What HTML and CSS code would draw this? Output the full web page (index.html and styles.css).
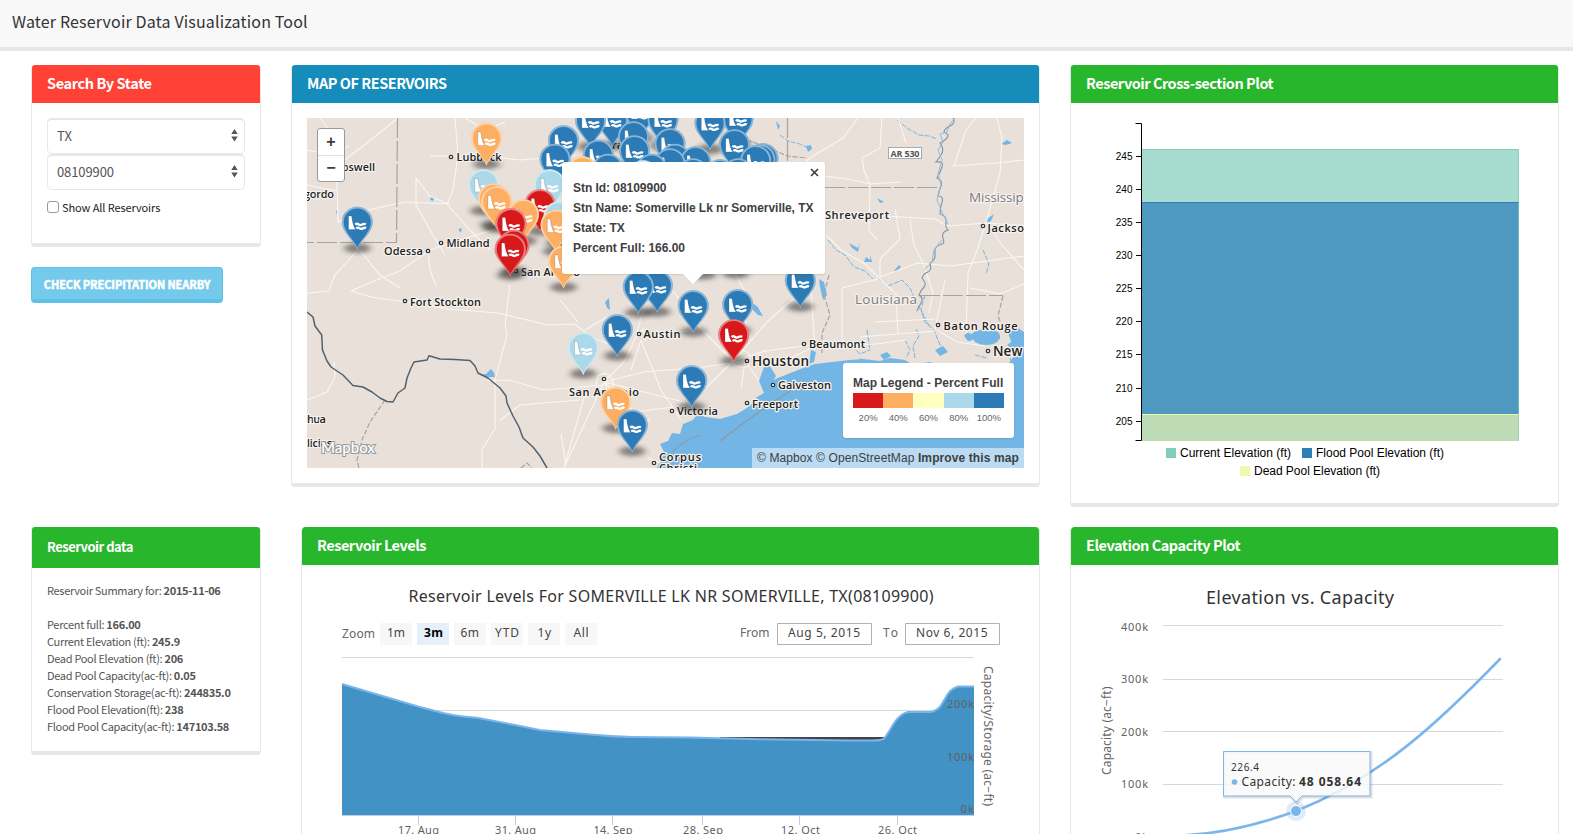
FILE: index.html
```html
<!DOCTYPE html>
<html lang="en">
<head>
<meta charset="utf-8">
<title>Water Reservoir Data Visualization Tool</title>
<link rel="stylesheet" href="styles.css">
</head>
<body>
<header class="navbar"><span class="brand">Water Reservoir Data Visualization Tool</span></header>
<main class="dashboard">
  <section class="side">
    <div class="panel search">
      <h3 class="head red">Search By State</h3>
      <div class="body">
        <div class="select"><span>TX</span><svg width="7" height="13" viewBox="0 0 7 13"><path d="M3.5 0L6.7 5H.3ZM.3 7.5H6.7L3.5 12.5Z"/></svg></div>
        <div class="select"><span>08109900</span><svg width="7" height="13" viewBox="0 0 7 13"><path d="M3.5 0L6.7 5H.3ZM.3 7.5H6.7L3.5 12.5Z"/></svg></div>
        <label class="check"><i></i><span>Show All Reservoirs</span></label>
      </div>
    </div>
    <button class="precip">CHECK PRECIPITATION NEARBY</button>
  </section>

  <section class="panel mappanel">
    <h3 class="head blue">MAP OF RESERVOIRS</h3>
    <div class="map">
      <svg class="canvas" width="717" height="350" viewBox="307 118 717 350">
        <defs>
          <filter id="soft" x="-50%" y="-100%" width="200%" height="300%"><feGaussianBlur stdDeviation="3.2 2"/></filter>
          <g id="pin">
            <ellipse cx="0" cy="-1" rx="13" ry="5" fill="#222" opacity=".5" filter="url(#soft)"/>
            <path d="M0 .5C-3 -9 -15.500 -16.500 -15.500 -27A15.500 15.500 0 1 1 15.500 -27C15.500 -16.500 3 -9 0 .5Z" fill="currentColor"/>
            <path d="M0 .5C-3 -9 -15.500 -16.500 -15.500 -27A15.500 15.500 0 1 1 15.500 -27C15.500 -16.500 3 -9 0 .5Z" fill="#fff" opacity=".45"/>
            <path d="M0 -1.500C-3 -9.500 -13.600 -17 -13.600 -27A13.600 13.600 0 1 1 13.600 -27C13.600 -17 3 -9.500 0 -1.500Z" fill="currentColor"/>
            <path d="M-8.700 -19.800V-33.300H-5.700C-4.900 -27 -4 -23 -1.700 -19.800Z" fill="#fff" stroke="#345" stroke-opacity=".35" stroke-width=".6"/>
            <path d="M-2 -24.600q1.600 -1.700 3.200 -.3t3.600 .2t3.800 -.3M-1 -20.700q1.500 -1.600 3 -.3t3.400 .2t3.400 -.3" fill="none" stroke="#fff" stroke-width="2.300"/>
          </g>
        </defs>
        <rect x="307" y="118" width="717" height="350" fill="#e8e0d9"/>
        <!-- gulf and bays -->
        <g fill="#73b6e6">
          <path d="M657 468L664 452 660 444 668 441 672 433 680 434 683 424 693 420 698 413 705 417 720 419 737 414 750 406 757 397 764 393 759 381 764 367 771 370 773 380 783 376 803 368 815 364 832 362 850 360 863 359 880 361 890 358 905 360 913 365 930 362 950 372 980 366 1000 369 1010 362 1016 352 1007 345 1017 338 1024 335V468Z"/>
          <path d="M971 335q5 -7 18 -4q12 -2 11 7q-3 7 -13 7q-14 0 -16 -10M964 336q4 -6 8 -1t-4 6ZM1008 333l10 -5 6 4v10l-12 2ZM764 366l4 -3 8 13 -4 6ZM750 302l7 4 6 10 -5 -1 -8 -8ZM811 350l5 2 -2 10 -5 2Z"/>
          <path d="M605 302l4 -4 1 12 -3 -2ZM819 279l5 3 3 13 -4 5 -3 -13ZM806 146l5 -1 1 4 -4 3ZM987 219l7 -5 -3 7 -6 3Z"/>
          <path d="M486 374l5 -5 3 4 1 4h-7l-8 -2ZM893 272l6 -7 2 2 -4 4ZM1001 144l6 -4 5 3 -6 2ZM849 243l9 5 2 -5 -2 9 -6 -4ZM856 364l5 -6 4 5ZM880 355l7 -3 4 4 -7 4ZM935 350l8 -4 5 6 -8 4Z"/>
          <path d="M431 197l3 1 -1 3 -3 -1ZM459 228l3 1 -1 3 -2 -1ZM336 210l2 2 -1 4ZM776 121l4 5 -2 4ZM866 257l4 3v-5l2 7h-8ZM877 198l7 4 -4 1Z"/>
        </g>
        <path d="M672 452Q684 440 700 435M795 388Q760 410 720 441" fill="none" stroke="#8d9aa3" stroke-width="1.200"/>
        <g fill="none" stroke="#73b6e6" stroke-width="1" stroke-dasharray="5 1.500">
          <path d="M828 240l8 10 9 5 9 12 11 4 8 8M878 278l10 8 14 -6 8 8 6 14 7 12 6 12M897 120l10 8 12 7 10 1 8 3M780 135l8 6 12 3 8 4"/>
          <path d="M915 358l-2 -12 6 -10 -3 -8M925 295l-4 14 4 13 9 8 8 20M983 250l6 14 -3 10M852 346l8 8 10 -4M867 330l3 20M905 340l5 10 -4 8M975 355l12 3M1010 358l6 20 4 12"/>
        </g>
        <!-- roads -->
        <g fill="none" stroke="#faf7f3" stroke-width="1.100">
          <path d="M398 118L368 142 346 159 330 170M337 180L338 222 352 216 368 210 405 202 450 204M358 250L335 275 329 291 307 293M358 248L380 275 400 288M351 291L374 281 400 271 430 250 460 240 500 228 523 218M307 150l20 4 22 -8M455 118L458 155 453 190 447 204 470 230 490 250M430 156H485L520 160 548 158 575 155M416 178L430 196 448 204M416 178V205L433 235 445 255"/>
          <path d="M428 250l2 20 6 16M351 291l20 6 35 5 42 7 50 4 50 12 26 -1 20 14 20 8M510 285l-5 40 2 10 -12 45v50M488 381l20 -1 36 10 60 -5M494 430L482 450V468M500 420l20 -15 60 -5M561 434l5 32M585 394l-21 74M604 382l-40 86M604 382l20 -20 12 -25 5 -20M604 382l40 -10 60 -5 40 -6M604 382l12 30 14 40M641 340l-10 30M641 340l20 50 20 30M604 382l80 20M604 382l30 30 40 -5M733 361l-45 45M733 361l35 -40 25 -22M733 361l-30 -30 -30 -40M733 361l32 -10 60 -8M745 345l2 -50 -14 -25M745 361l14 20M745 361l-4 28M673 468l-25 -10M693 330l-50 8"/>
          <path d="M858 118l-15 20 -25 15 -12 8M882 118l-2 30 -18 10 2 12 6 15 -1 45 8 10M817 175l30 4 24 5 30 -2M898 118l8 25M825 214h30l30 2 50 3 12 7 40 -3 42 3M826 235l15 15 24 14 15 15 16 15 2 40M880 277v-18l20 -20 -5 -30M880 277l38 -14 32 3 30 -4 44 -6M842 288l36 -9M842 288v58M875 322l60 -3M860 337l75 -6M910 220l4 25 9 18 10 30 -4 20M986 223l-10 30 -8 20 -2 60M986 223l17 23 21 24M986 223l14 -50 2 -35 -5 -20M952 166l45 -3 27 -3M954 166l12 -36 10 -12M970 288l30 6 24 -10M937 330l20 12 28 4M935 330l10 -50M815 350l-4 -60M786 360l30 -14 60 -2 30 -4"/>
          <path d="M307 400l20 -8 8 -15 -1 -15M307 185l30 6M320 118l8 10M465 118l20 12 20 -8M560 300l18 22M585 330l20 -12 30 -2M650 418l-20 30"/>
          <path d="M598 376q10 -6 14 3t-4 12q-12 2 -12 -7ZM735 353q14 -6 15 5t-9 9q-13 -2 -8 -13ZM637 335l6 -6 3 12"/>
        </g>
        <!-- borders -->
        <g fill="none" stroke="#a5a3a3" stroke-width="1.200" stroke-dasharray="20 3">
          <path d="M397.500 118L396.500 242.500H307M787.500 118V165M825 187.500H937M920 295.500H1003"/>
          <path d="M385 400L370 422 362 440 357 460 359 468M740 138l25 8 22 10 20 2M1003 296l-5 20 8 20M829 275l-5 20 6 20 -8 18v20M521 468l6 -5 5 5" stroke-dasharray="5 2"/>
        </g>
        <path d="M307 312L313 317 315 326 321.700 335 322.500 350 327 361 331 367 343 375 353 385.500 363 387 372 392 380 398 387 401.500 393 402 398 393 405 388 407 378 411 368 414 362 427 360 429 355.700 440 359 455 359.500 470 360.500 475 366 478 373 488 378 500 388 506 396 507 403 513 416 519 427 523 438 533 447 540 456 547 468" fill="none" stroke="#52616e" stroke-width="1.500" stroke-linejoin="round"/>
        <path d="M953 118q3 5 -3 8t-6 6q7 3 2 7t-6 4q5 6 1 12t-5 7q8 -1 6 5t-5 11q6 3 4 8t-3 10q6 0 4 6t-2 12q7 2 6 8t2 8q-7 2 -5 8t-1 6q-8 2 -7 9t-5 10q2 8 -2 9t-6 6q5 6 2 9t-5 8q5 3 2 8t-4 8" fill="none" stroke="#8094a5" stroke-width="1.100"/>
        <path d="M955 118l-5 6 -3 8 -7 2 3 8 -5 8 4 10 -4 14 3 10 -4 16 5 12 6 12M942 240l-8 10 -2 12 -8 8" fill="none" stroke="#8fbbe0" stroke-width="1"/>
        <!-- place names -->
        <g class="places">
          <g fill="#fff" stroke="#333" stroke-width="1.300"><circle cx="451" cy="157" r="1.700"/><circle cx="441" cy="243" r="1.700"/><circle cx="428" cy="251" r="1.700"/><circle cx="516" cy="271" r="1.700"/><circle cx="405" cy="301" r="1.700"/><circle cx="639" cy="334" r="1.700"/><circle cx="747" cy="361" r="1.700"/><circle cx="604" cy="379" r="1.700"/><circle cx="672" cy="411" r="1.700"/><circle cx="654" cy="463" r="1.700"/><circle cx="747" cy="403" r="1.700"/><circle cx="773" cy="385" r="1.700"/><circle cx="804" cy="344" r="1.700"/><circle cx="938" cy="325" r="1.700"/><circle cx="983" cy="226" r="1.700"/><circle cx="988" cy="351" r="1.700"/></g>
          <text x="335" y="171" textLength="40">Roswell</text>
          <text x="304" y="198" textLength="30">gordo</text>
          <text x="456.500" y="161" textLength="45">Lubbock</text>
          <text x="446.500" y="247" textLength="43">Midland</text>
          <text x="384" y="255" textLength="39">Odessa</text>
          <text x="521" y="275.500" textLength="59">San Angelo</text>
          <text x="410" y="305.500" textLength="71">Fort Stockton</text>
          <text x="307" y="423" textLength="19">hua</text>
          <text x="307" y="447" textLength="25">licias</text>
          <text x="643.500" y="338" textLength="37">Austin</text>
          <text x="569" y="395.500" textLength="70">San Antonio</text>
          <text x="677" y="415" textLength="41">Victoria</text>
          <text x="659" y="461" textLength="42">Corpus</text>
          <text x="659" y="472" textLength="38">Christi</text>
          <text x="752" y="365.500" textLength="57" style="font-size:13.500px">Houston</text>
          <text x="778" y="389" textLength="53">Galveston</text>
          <text x="752" y="408" textLength="46">Freeport</text>
          <text x="809" y="348" textLength="56">Beaumont</text>
          <text x="825" y="218.500" textLength="64">Shreveport</text>
          <text x="943.500" y="329.500" textLength="74">Baton Rouge</text>
          <text x="987.500" y="231.500" textLength="44">Jackson</text>
          <text x="993" y="356" textLength="84" style="font-size:13.500px">New Orleans</text>
          <text x="612" y="149">ra</text>
          <text class="state" x="855" y="304" textLength="62">Louisiana</text>
          <text class="state" x="969" y="201.500" textLength="66">Mississippi</text>
        </g>
        <rect x="888.500" y="147.500" width="33" height="11" fill="#fff" stroke="#aaa"/>
        <text class="shield" x="905" y="156.500" text-anchor="middle" textLength="29">AR 530</text>
        <!-- reservoir pins -->
        <g transform="translate(0 .7)">
        <g color="#2c7bb6">
          <use href="#pin" x="640" y="138"/><use href="#pin" x="612.500" y="146"/><use href="#pin" x="590.600" y="147"/><use href="#pin" x="663" y="146"/><use href="#pin" x="738" y="145"/><use href="#pin" x="710" y="149.500"/>
          <use href="#pin" x="633.500" y="163"/><use href="#pin" x="563.500" y="167"/><use href="#pin" x="670" y="170"/><use href="#pin" x="734.500" y="171"/><use href="#pin" x="634.500" y="177"/><use href="#pin" x="598.300" y="181.500"/><use href="#pin" x="763" y="185"/><use href="#pin" x="760" y="186"/><use href="#pin" x="755.700" y="187"/><use href="#pin" x="555" y="185.500"/>
          <use href="#pin" x="675" y="185.500"/><use href="#pin" x="695.700" y="188"/><use href="#pin" x="670" y="190"/><use href="#pin" x="608" y="195.500"/><use href="#pin" x="651.700" y="195.500"/><use href="#pin" x="693" y="200"/><use href="#pin" x="720" y="201"/><use href="#pin" x="738" y="200"/>
        </g>
        <g color="#abd9e9"><use href="#pin" x="643" y="202"/></g>
        <g color="#fdae61"><use href="#pin" x="486.500" y="164.500"/><use href="#pin" x="582.600" y="198"/></g>
        <g color="#abd9e9"><use href="#pin" x="483.500" y="211"/><use href="#pin" x="549.500" y="211"/></g>
        <g color="#fdae61"><use href="#pin" x="493.500" y="225"/><use href="#pin" x="496.700" y="228"/></g>
        <g color="#d7191c"><use href="#pin" x="540" y="231"/></g>
        <g color="#fdae61"><use href="#pin" x="523.500" y="241"/></g>
        <g color="#abd9e9"><use href="#pin" x="559" y="243"/></g>
        <g color="#2c7bb6"><use href="#pin" x="357.300" y="248.500"/></g>
        <g color="#d7191c"><use href="#pin" x="511" y="250"/></g>
        <g color="#fdae61"><use href="#pin" x="556" y="251.500"/></g>
        <g color="#d7191c"><use href="#pin" x="514" y="271.500"/><use href="#pin" x="510.300" y="275.500"/></g>
        <g color="#fdae61"><use href="#pin" x="563.600" y="287.500"/></g>
        <g color="#2c7bb6"><use href="#pin" x="736" y="274"/><use href="#pin" x="703" y="275"/><use href="#pin" x="800.300" y="307"/><use href="#pin" x="657.300" y="312"/><use href="#pin" x="638.300" y="313"/><use href="#pin" x="737.700" y="331"/><use href="#pin" x="693.300" y="332"/><use href="#pin" x="617.300" y="356"/></g>
        <g color="#d7191c"><use href="#pin" x="733.700" y="361"/></g>
        <g color="#abd9e9"><use href="#pin" x="583.300" y="374"/></g>
        <g color="#2c7bb6"><use href="#pin" x="691.700" y="407"/></g>
        <g color="#fdae61"><use href="#pin" x="615.700" y="428.500"/></g>
        <g color="#2c7bb6"><use href="#pin" x="632.300" y="451.500"/></g>
        </g>
        <text class="logo" x="321" y="452.500" textLength="54">Mapbox</text>
      </svg>
      <div class="zoomctl"><span>+</span><span>−</span></div>
      <div class="popup">
        <svg class="x" width="9" height="9" viewBox="0 0 9 9"><path d="M1 1L8 8M8 1L1 8"/></svg>
        <p>Stn Id: 08109900</p><p>Stn Name: Somerville Lk nr Somerville, TX</p><p>State: TX</p><p>Percent Full: 166.00</p>
      </div>
      <div class="maplegend">
        <b>Map Legend - Percent Full</b>
        <div class="scale"><i class="c1"></i><i class="c2"></i><i class="c3"></i><i class="c4"></i><i class="c5"></i></div>
        <div class="ticks"><span>20%</span><span>40%</span><span>60%</span><span>80%</span><span>100%</span></div>
      </div>
      <div class="credit">© Mapbox © OpenStreetMap <b>Improve this map</b></div>
    </div>
  </section>

  <section class="panel cross">
    <h3 class="head green">Reservoir Cross-section Plot</h3>
    <svg class="chart" width="487" height="400" viewBox="1071 103 487 400">
      <rect x="1142" y="149" width="377" height="54" fill="#a6dccf"/>
      <rect x="1142" y="202" width="377" height="213" fill="#4f99c1"/>
      <rect x="1142" y="414" width="377" height="27" fill="#bddbb5"/>
      <path d="M1142 149.500H1519" stroke="#7fcdbb"/><path d="M1142 202.500H1519" stroke="#2c7fb8"/><path d="M1142 414.500H1519" stroke="#edf8b1"/>
      <path d="M1518.500 150V441" stroke="#7fcdbb" opacity=".6"/>
      <path d="M1135.500 123.500H1141.500V440.500H1135.500M1136 156.500h5M1136 189.500h5M1136 222.500h5M1136 255.500h5M1136 288.500h5M1136 321.500h5M1136 354.500h5M1136 388.500h5M1136 421.500h5" fill="none" stroke="#000"/>
      <g class="d3" text-anchor="end"><text x="1132.500" y="160">245</text><text x="1132.500" y="193">240</text><text x="1132.500" y="226">235</text><text x="1132.500" y="259">230</text><text x="1132.500" y="292">225</text><text x="1132.500" y="325">220</text><text x="1132.500" y="358">215</text><text x="1132.500" y="392">210</text><text x="1132.500" y="425">205</text></g>
      <rect x="1166" y="448" width="10" height="10" fill="#7fcdbb"/><rect x="1302" y="448" width="10" height="10" fill="#2c7fb8"/><rect x="1240" y="466" width="10" height="10" fill="#edf8b1"/>
      <g class="d3 big"><text x="1180" y="457" textLength="111">Current Elevation (ft)</text><text x="1316" y="457" textLength="128">Flood Pool Elevation (ft)</text><text x="1254" y="475" textLength="126">Dead Pool Elevation (ft)</text></g>
    </svg>
  </section>

  <section class="panel data">
    <h3 class="head green tall">Reservoir data</h3>
    <div class="body">
      <p>Reservoir Summary for: <b>2015-11-06</b></p><p>&nbsp;</p>
      <p>Percent full: <b>166.00</b></p><p>Current Elevation (ft): <b>245.9</b></p><p>Dead Pool Elevation (ft): <b>206</b></p><p>Dead Pool Capacity(ac-ft): <b>0.05</b></p><p>Conservation Storage(ac-ft): <b>244835.0</b></p><p>Flood Pool Elevation(ft): <b>238</b></p><p>Flood Pool Capacity(ac-ft): <b>147103.58</b></p>
    </div>
  </section>

  <section class="panel levels">
    <h3 class="head green">Reservoir Levels</h3>
    <svg class="chart hc" width="737" height="300" viewBox="302 565 737 300">
      <text class="title" x="408.500" y="602" textLength="525" font-size="16">Reservoir Levels For SOMERVILLE LK NR SOMERVILLE, TX(08109900)</text>
      <text x="342" y="638" textLength="33">Zoom</text>
      <g fill="#f7f7f7"><rect x="380" y="623" width="32" height="22"/><rect x="417" y="623" width="32" height="22" fill="#e6f0fa"/><rect x="454" y="623" width="32" height="22"/><rect x="491" y="623" width="32" height="22"/><rect x="528" y="623" width="32" height="22"/><rect x="565" y="623" width="32" height="22"/></g>
      <g class="btn"><text x="387" y="637" textLength="18">1m</text><text x="424" y="637" textLength="19" class="on">3m</text><text x="460.500" y="637" textLength="18.500">6m</text><text x="495" y="637" textLength="24">YTD</text><text x="537.500" y="637" textLength="13.500">1y</text><text x="573.500" y="637" textLength="15">All</text></g>
      <text x="740" y="637" textLength="29.500">From</text><text x="883" y="637" textLength="15">To</text>
      <path d="M777.500 623.500h94v21h-94ZM905.500 623.500h94v21h-94Z" fill="none" stroke="#b2b2b2"/>
      <g class="btn"><text x="788" y="637" textLength="72">Aug 5, 2015</text><text x="916" y="637" textLength="71.500">Nov 6, 2015</text></g>
      <path d="M342 657.500H974M342 710.500H974" stroke="#d8d8d8"/>
      <path d="M720 738H886V742H720Z" fill="#434348"/>
      <path d="M342 684L418 706.500 443 713Q454 715.500 463 716.500L477 717.800 515 725 540 730 590 734.500Q612 736.500 632 737L690 737.500 760 739.300 850 740.500H872Q882 740.500 884 738.500C891 731 895 715 908 712H930C946 710 943 690 958 686.500H974V815H342Z" fill="#4292c6"/>
      <path d="M720 737.700H885" stroke="#434348" stroke-width="1.300"/>
      <path d="M342 684L418 706.500 443 713Q454 715.500 463 716.500L477 717.800 515 725 540 730 590 734.500Q612 736.500 632 737L690 737.500 760 739.300 850 740.500H872Q882 740.500 884 738.500C891 731 895 715 908 712H930C946 710 943 690 958 686.500H974" fill="none" stroke="#7cb5ec" stroke-width="2"/>
      <path d="M342 815.500H974M418.500 816V825M515.500 816V825M612.500 816V825M702.500 816V825M799.500 816V825M897.500 816V825" stroke="#c0d0e0"/>
      <g class="axis"><text x="398" y="834" textLength="41">17. Aug</text><text x="495" y="834" textLength="41">31. Aug</text><text x="593.500" y="834" textLength="39">14. Sep</text><text x="683" y="834" textLength="40">28. Sep</text><text x="781" y="834" textLength="39">12. Oct</text><text x="878" y="834" textLength="39">26. Oct</text>
      <text x="947" y="708" textLength="27">200k</text><text x="947" y="761" textLength="27">100k</text><text x="960.500" y="813" textLength="13.500">0k</text></g>
      <text transform="translate(984 666) rotate(90)" textLength="140">Capacity/Storage (ac−ft)</text>
    </svg>
  </section>

  <section class="panel elev">
    <h3 class="head green">Elevation Capacity Plot</h3>
    <svg class="chart hc" width="487" height="300" viewBox="1071 565 487 300">
      <text class="title" x="1206" y="603.500" textLength="188" font-size="18">Elevation vs. Capacity</text>
      <path d="M1163 625.500H1503M1163 679.500H1503M1163 731.500H1503M1163 784.500H1503" stroke="#d8d8d8"/>
      <g class="axis"><text x="1121" y="631" textLength="27">400k</text><text x="1121" y="683" textLength="27">300k</text><text x="1121" y="736" textLength="27">200k</text><text x="1121" y="788" textLength="27">100k</text><text x="1135" y="841" textLength="13">0k</text></g>
      <text transform="translate(1111 775) rotate(-90)" textLength="88.500">Capacity (ac−ft)</text>
      <path d="M1180 835.500C1220 834 1255 826 1296 811 1380 778 1440 721 1500 659" fill="none" stroke="#7cb5ec" stroke-width="2.600" stroke-linecap="round"/>
      <circle cx="1296" cy="811" r="10" fill="#7cb5ec" opacity=".25"/><circle cx="1296" cy="811" r="5.500" fill="#7cb5ec" stroke="#fff"/>
      <g fill="none" stroke="#000" opacity=".12" transform="translate(1 1)"><path d="M1223.500 751.500H1370V796H1302L1296 802 1290 796H1223.500Z" stroke-width="3"/></g>
      <path d="M1223.500 751.500H1370V796H1302L1296 802 1290 796H1223.500Z" fill="#f9f9f9" fill-opacity=".85" stroke="#7cb5ec"/>
      <g class="tip"><text x="1231" y="770.500" textLength="28" font-size="10">226.4</text><circle cx="1234.500" cy="782" r="2.800" fill="#7cb5ec"/><text x="1241.500" y="786" textLength="54">Capacity:</text><text x="1299" y="786" textLength="62" font-weight="700">48 058.64</text></g>
    </svg>
  </section>
</main>
</body>
</html>
```
FILE: styles.css
```css
* { box-sizing: border-box; }
body { margin: 0; height: 834px; overflow: hidden; background: #fff; color: #333; font-family: "Noto Sans CJK SC", "Open Sans", sans-serif; }
h3, p { margin: 0; }
.navbar { height: 51px; padding-left: 12px; background: #f8f8f8; border-bottom: 4px solid #e7e7e7; }
.brand { display: block; font-size: 16px; line-height: 42px; letter-spacing: .16px; white-space: nowrap; }
.dashboard { display: grid; grid-template-columns: 260px 779px 489px; grid-template-rows: 462px 340px; align-items: start; padding: 14px 0 0 31px; }
.panel { border: 1px solid #e7e7e7; border-top: 0; border-bottom: 4px solid #e7e7e7; border-radius: 4px; background: #fff; }
.head { height: 38px; padding-left: 15px; border-radius: 3px 3px 0 0; color: #fff; font-size: 14.5px; font-weight: 700; line-height: 35px; letter-spacing: -.47px; white-space: nowrap; }
.red { background: #ff4136; letter-spacing: -.38px; }
.blue { background: #158cba; }
.green { background: #28b62c; }
.side { width: 230px; }
.search { height: 182px; }
.search .body { padding: 15px; }
.select { display: flex; align-items: center; justify-content: space-between; width: 198px; height: 36px; padding: 0 6px 2px 9px; border: 1px solid #e7e7e7; border-top-width: 2px; border-radius: 5px; color: #555; font-size: 13px; letter-spacing: -.1px; }
.select svg { fill: #555; }
.check { display: flex; align-items: center; height: 13px; margin-top: 10px; font-size: 11px; letter-spacing: -.1px; color: #222; }
.check i { width: 12px; height: 12px; margin-right: 3px; border: 1px solid #999; border-radius: 3px; }
.precip { display: block; width: 192px; height: 36px; margin-top: 20px; padding: 0; border: 1px solid #5fc1e8; border-bottom-width: 4px; border-radius: 4px; background: #75caeb; color: #fff; font: 700 11px/30px "Noto Sans CJK SC", sans-serif; letter-spacing: -.08px; -webkit-text-stroke: .5px #fff; white-space: nowrap; }
.mappanel { width: 749px; height: 422px; }
.map { position: relative; width: 717px; height: 350px; margin: 15px 0 0 15px; overflow: hidden; font-family: "Liberation Sans", Arial, sans-serif; color: #404040; }
.canvas, .chart { display: block; }
.places text { font: 600 11px "Open Sans", sans-serif; fill: #222; stroke: #f5f1ed; stroke-width: 2.5px; paint-order: stroke; stroke-linejoin: round; }
.places .state { font-size: 13.5px; font-weight: 400; fill: #7b7b80; }
.shield { font: 700 9px "Open Sans", sans-serif; fill: #555; }
.logo { font: 600 15px Lato, sans-serif; fill: #fff; stroke: #999; stroke-width: 2px; paint-order: stroke; }
.zoomctl { position: absolute; left: 10px; top: 10px; width: 28px; height: 54px; border: 1px solid #999; border-radius: 3px; background: #fff; }
.zoomctl span { display: block; height: 26px; font-size: 16px; font-weight: 700; line-height: 26px; text-align: center; }
.zoomctl span + span { border-top: 1px solid #ddd; line-height: 24px; }
.popup { position: absolute; left: 255px; top: 44px; width: 263px; height: 112px; padding: 16px 11px; border-radius: 3px; background: #fff; box-shadow: 0 1px 2px rgba(0,0,0,.1); font-size: 12px; font-weight: 700; line-height: 20px; letter-spacing: -.04px; white-space: nowrap; }
.popup::after { content: ""; position: absolute; left: 121px; top: 112px; border: 10px solid transparent; border-top-color: #fff; border-bottom: 0; }
.popup .x { position: absolute; right: 6px; top: 6px; fill: none; stroke: #404040; stroke-width: 1.7; }
.maplegend { position: absolute; left: 536px; top: 245px; width: 171px; height: 75px; padding: 10px; border-radius: 3px; background: #fff; box-shadow: 0 1px 2px rgba(0,0,0,.12); white-space: nowrap; }
.maplegend b { display: block; height: 20px; font-size: 12px; line-height: 20px; letter-spacing: .04px; }
.scale { display: flex; height: 15px; }
.scale i { flex: 1; }
.c1 { background: #d7191c; } .c2 { background: #fdae61; } .c3 { background: #ffffbf; } .c4 { background: #abd9e9; } .c5 { background: #2c7bb6; }
.ticks { display: flex; font-size: 9.5px; line-height: 20px; color: #666; }
.ticks span { flex: 1 0 0; text-align: center; }
.credit { position: absolute; right: 0; bottom: 0; width: 272px; height: 20px; padding-left: 5px; background: rgba(255,255,255,.5); font-size: 12px; line-height: 20px; letter-spacing: .1px; white-space: nowrap; }
.cross { width: 489px; height: 442px; }
.d3 { font: 10px "Liberation Sans", Arial, sans-serif; fill: #000; }
.big { font-size: 12px; }
.data { width: 230px; height: 228px; }
.head.tall { height: 41px; font-size: 13px; line-height: 40px; letter-spacing: -.5px; }
.data .body { padding: 14px 15px; font-size: 11px; line-height: 17px; letter-spacing: -.31px; color: #555; white-space: nowrap; }
.levels { width: 739px; height: 340px; margin-left: 10px; overflow: hidden; }
.elev { width: 489px; height: 340px; overflow: hidden; }
.hc { font: 12px "Noto Sans", "Open Sans", sans-serif; fill: #666; }
.hc .title { fill: #333; }
.hc .btn { fill: #444; }
.hc .on { fill: #000; font-weight: 700; }
.hc .axis { font-size: 11px; fill: #606060; }
.hc .tip { fill: #333; }
```
